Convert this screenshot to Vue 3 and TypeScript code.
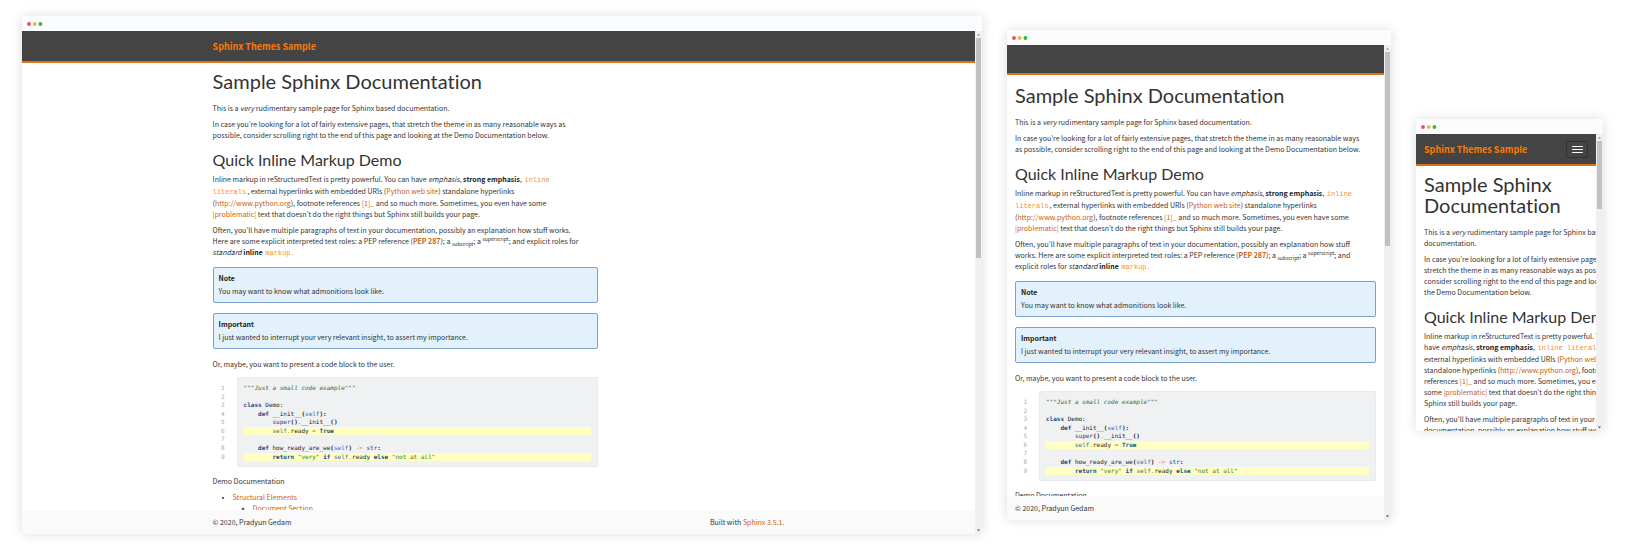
<script setup lang="ts">
interface Frame {
  id: string
  brand: boolean
  toggle: boolean
  footer: boolean
  credit: boolean
}

interface Token {
  k: string
  t: string
}

interface CodeLine {
  hl: boolean
  tokens: Token[]
}

const frames: Frame[] = [
  { id: 'desktop', brand: true, toggle: false, footer: true, credit: true },
  { id: 'tablet', brand: false, toggle: false, footer: true, credit: false },
  { id: 'mobile', brand: true, toggle: true, footer: false, credit: false },
]

const line = (hl: boolean, ...parts: string[]): CodeLine => ({
  hl,
  tokens: parts.map((part) => {
    const cut = part.indexOf('|')
    return { k: part.slice(0, cut), t: part.slice(cut + 1) }
  }),
})

const code: CodeLine[] = [
  line(false, 'doc|"""Just a small code example"""'),
  line(false, 'n| '),
  line(false, 'kw|class', 'n| Demo:'),
  line(false, 'n|    ', 'kw|def', 'n| __init__', 'p|(', 'bi|self', 'p|):'),
  line(false, 'n|        ', 'fn|super', 'p|()', 'op|.', 'n|__init__', 'p|()'),
  line(true, 'n|        ', 'bi|self', 'op|.', 'n|ready ', 'op|=', 'n| ', 'kw|True'),
  line(false, 'n| '),
  line(false, 'n|    ', 'kw|def', 'n| how_ready_are_we', 'p|(', 'bi|self', 'p|)', 'n| ', 'op|->', 'n| ', 'fn|str', 'p|:'),
  line(true, 'n|        ', 'kw|return', 'n| ', 's|"very"', 'n| ', 'kw|if', 'n| ', 'bi|self', 'op|.', 'n|ready ', 'kw|else', 'n| ', 's|"not at all"'),
]
</script>

<template>
  <div class="stage">
    <article v-for="frame in frames" :key="frame.id" class="window" :class="frame.id">
      <div class="titlebar">
        <svg class="lights" viewBox="0 0 16 4" aria-hidden="true">
          <circle cx="2" cy="2" r="1.9" fill="#ee4b5a" />
          <circle cx="7.7" cy="2" r="1.9" fill="#f6b53c" />
          <circle cx="13.4" cy="2" r="1.9" fill="#2fb93f" />
        </svg>
      </div>
      <div class="viewport">
        <div class="page">
          <header class="navbar">
            <div class="container bar">
              <a v-if="frame.brand" class="brand" href="#">Sphinx Themes Sample</a>
              <button v-if="frame.toggle" class="toggle" type="button" aria-label="Toggle navigation">
                <span></span><span></span><span></span>
              </button>
            </div>
          </header>

          <div class="scroll">
            <div class="container">
              <main class="content">
                <h1>Sample Sphinx Documentation</h1>
                <p>This is a <em>very</em> rudimentary sample page for Sphinx based documentation.</p>
                <p>
                  In case you’re looking for a lot of fairly extensive pages, that stretch the theme in as many
                  reasonable ways as possible, consider scrolling right to the end of this page and looking at the
                  Demo Documentation below.
                </p>
                <h2>Quick Inline Markup Demo</h2>
                <p>
                  Inline markup in reStructuredText is pretty powerful. You can have <em>emphasis</em>,
                  <strong>strong emphasis</strong>, <code>inline literals</code>, external hyperlinks with embedded
                  URIs (<a href="#">Python web site</a>) standalone hyperlinks (<a href="#">http://www.python.org</a>),
                  footnote references <a href="#">[1]_</a> and so much more. Sometimes, you even have some
                  <a href="#">|problematic|</a> text that doesn’t do the right things but Sphinx still builds your
                  page.
                </p>
                <p>
                  Often, you’ll have multiple paragraphs of text in your documentation, possibly an explanation how
                  stuff works. Here are some explicit interpreted text roles: a PEP reference
                  (<a href="#"><strong>PEP 287</strong></a>); a <sub>subscript</sub>; a <sup>superscript</sup>; and
                  explicit roles for <em>standard</em> <strong>inline</strong> <code>markup</code><span class="dot">.</span>
                </p>
                <aside class="note">
                  <p class="note-title">Note</p>
                  <p>You may want to know what admonitions look like.</p>
                </aside>
                <aside class="note">
                  <p class="note-title">Important</p>
                  <p>I just wanted to interrupt your very relevant insight, to assert my importance.</p>
                </aside>
                <p>Or, maybe, you want to present a code block to the user.</p>
                <div class="listing">
                  <div class="numbers">
                    <span v-for="(_, i) in code" :key="i">{{ i + 1 }}</span>
                  </div>
                  <div class="source">
                    <div v-for="(row, i) in code" :key="i" class="row" :class="{ hl: row.hl }">
                      <span v-for="(tok, j) in row.tokens" :key="j" :class="tok.k">{{ tok.t }}</span>
                    </div>
                  </div>
                </div>
                <p class="toc-title">Demo Documentation</p>
                <ul>
                  <li>
                    <a href="#">Structural Elements</a>
                    <ul>
                      <li><a href="#">Document Section</a></li>
                    </ul>
                  </li>
                </ul>
              </main>
            </div>
          </div>

          <footer v-if="frame.footer" class="footer">
            <div class="container bar">
              <span>© 2020, Pradyun Gedam</span>
              <span v-if="frame.credit">Built with <a href="#">Sphinx 3.5.1.</a></span>
            </div>
          </footer>
        </div>
        <div class="scrollbar" aria-hidden="true">
          <svg viewBox="0 0 7 7"><path d="M2 4.5 3.5 2.8 5 4.5z" fill="#8a8a8a" /></svg>
          <div class="track"><div class="thumb"></div></div>
          <svg viewBox="0 0 7 7"><path d="M2 2.5 3.5 4.3 5 2.5z" fill="#444" /></svg>
        </div>
      </div>
    </article>
  </div>
</template>

<style>
body {
  margin: 0;
  background: #fff;
}
</style>

<style scoped>
.stage {
  display: flex;
  align-items: center;
  gap: 25px;
  padding: 16px 22px;
  overflow: hidden;
  color: #333;
  font-family: "Noto Sans CJK KR", "Open Sans", sans-serif;
  font-size: 7px;
  line-height: 11px;
}

.window {
  display: flex;
  flex-direction: column;
  min-width: 0;
  min-height: 0;
  border-radius: 3px;
  background: #fff;
  box-shadow: 0 0 12px rgba(0, 0, 0, 0.14);
  overflow: hidden;
}
.desktop { flex: 960 1 0; aspect-ratio: 960 / 518; }
.tablet { flex: 384 1 0; aspect-ratio: 384 / 490; }
.mobile { flex: 187 1 0; aspect-ratio: 187 / 312; }

.titlebar {
  display: flex;
  align-items: center;
  flex: none;
  height: 15px;
  padding-left: 5px;
  background: #fafcfe;
}
.lights { width: 16px; height: 4px; }

.viewport {
  display: flex;
  flex: 1;
  min-height: 0;
}
.page {
  display: flex;
  flex-direction: column;
  flex: 1;
  min-width: 0;
}

.container {
  box-sizing: border-box;
  width: 60%;
  margin: 0 auto;
}
.tablet .container,
.mobile .container {
  width: 100%;
  padding: 0 8px;
}
.content { width: 385px; max-width: 100%; }
.content > p { max-width: 97%; }
.mobile .content { width: 211px; max-width: none; }

.bar {
  display: flex;
  align-items: center;
  justify-content: space-between;
}

.navbar {
  display: flex;
  align-items: center;
  flex: none;
  height: 30px;
  background: #444;
  border-bottom: 2px solid #dd721c;
}
.tablet .navbar { height: 28px; }
.brand {
  color: #ff7800;
  font-size: 9px;
  font-weight: 700;
}
.toggle {
  display: flex;
  flex-direction: column;
  align-items: center;
  justify-content: center;
  gap: 2px;
  box-sizing: border-box;
  width: 22px;
  height: 17px;
  padding: 0;
  border: 1px solid #333;
  border-radius: 2px;
  background: #444;
}
.toggle span {
  width: 11px;
  height: 1px;
  border-radius: 1px;
  background: #fff;
}

.scroll {
  flex: 1;
  min-height: 0;
  overflow: hidden;
}

h1,
h2 {
  margin: 0;
  font-family: Lato, sans-serif;
  font-weight: 400;
  font-variant-ligatures: none;
}
h1 {
  margin: 8px 0 11px;
  font-size: 20px;
  line-height: 21px;
}
.tablet h1 { margin-top: 10px; }
h2 {
  margin: 10px 0 5px;
  font-size: 16px;
  line-height: 18px;
}
p { margin: 0 0 5px; }
a { color: #c9600f; text-decoration: none; }
strong { font-weight: 700; color: #222; }
a strong { color: inherit; }
code {
  padding: 0 1px;
  color: #ff8c33;
  font-family: "Liberation Mono", monospace;
  font-size: 7px;
}
.dot { color: #ff8c33; }
sub,
sup { font-size: 5px; line-height: 0; }

.note {
  margin: 8px 0 10px;
  padding: 5px;
  border: 1px solid #7ba0cf;
  border-radius: 2px;
  background: #e2f1fc;
}
.note p { margin: 0; }
.note .note-title {
  margin-bottom: 2px;
  color: #222;
  font-weight: 700;
}

.listing {
  display: flex;
  margin: 7px 0 9px;
  font-family: "DejaVu Sans Mono", monospace;
  font-size: 6px;
  line-height: 1.43;
}
.numbers {
  display: flex;
  flex-direction: column;
  flex: none;
  width: 12px;
  padding: 7px 12px 5px 0;
  color: #aaa;
  text-align: right;
}
.source {
  flex: 1;
  min-width: 0;
  padding: 6px 6px 5px;
  border: 1px solid #e9ebee;
  border-radius: 2px;
  background: #f0f1f3;
  color: #222;
}
.row { white-space: pre; }
.hl { background: #ffffc4; }
.doc { color: #2f6b2f; font-style: italic; }
.kw { color: #204a87; font-weight: 700; }
.bi { color: #3465a4; }
.fn { color: #204a87; }
.op { color: #e07020; }
.p { font-weight: 700; }
.s { color: #3a7d12; }

ul { margin: 0; padding-left: 20px; list-style: disc; }
ul ul { list-style: circle; }
li::marker { font-size: 6px; }

.footer {
  display: flex;
  align-items: center;
  flex: none;
  height: 24px;
  background: #fafafa;
}

.scrollbar {
  display: flex;
  flex-direction: column;
  flex: none;
  width: 7px;
  background: #f0f0f0;
}
.scrollbar svg { display: block; flex: none; width: 7px; height: 7px; }
.track { flex: 1; }
.thumb { margin: 0 1px; height: 45%; background: #c1c1c1; }
.tablet .thumb { height: 42%; }
.mobile .thumb { height: 24%; }
</style>
